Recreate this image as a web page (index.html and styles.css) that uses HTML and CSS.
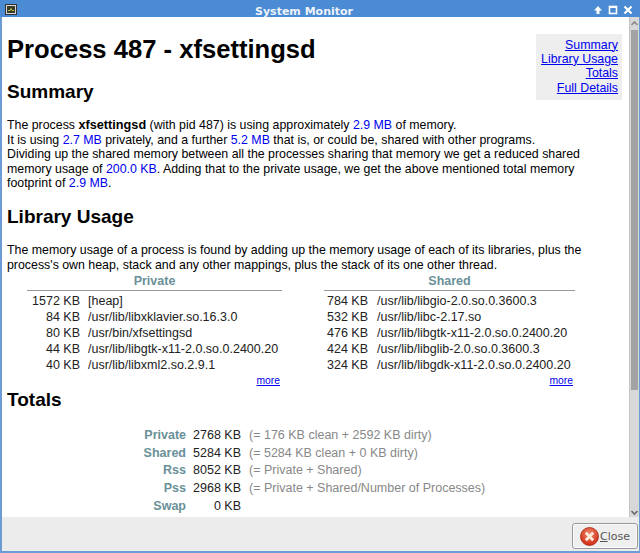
FILE: index.html
```html
<!DOCTYPE html>
<html lang="en">
<head>
<meta charset="utf-8">
<title>System Monitor</title>
<link rel="stylesheet" href="styles.css">
</head>
<body>
<div class="window">
  <header class="titlebar">
    <svg class="app-icon" width="12" height="11" viewBox="0 0 12 11"><rect x="0.5" y="0.5" width="11" height="10" fill="#d8d8d8" stroke="#333"/><rect x="2" y="2" width="8" height="7" fill="#3a3a2a"/><path d="M3 6.5h2l1-2 1 2h2" stroke="#b8c040" fill="none"/></svg>
    <span class="title">System Monitor</span>
    <div class="controls">
      <svg width="10" height="10" viewBox="0 0 10 10"><path d="M5 1L9 5.5H6.5V9h-3V5.5H1z" fill="#fff"/></svg>
      <svg width="10" height="10" viewBox="0 0 10 10"><rect x="1.5" y="1.5" width="7" height="7" fill="none" stroke="#fff" stroke-width="1.6"/><rect x="1" y="1" width="8" height="2" fill="#fff"/></svg>
      <svg width="10" height="10" viewBox="0 0 10 10"><path d="M1.5 1.5l7 7M8.5 1.5l-7 7" stroke="#fff" stroke-width="2.2"/></svg>
    </div>
  </header>
  <div class="middle">
    <main class="content">
      <nav class="toc">
        <a href="#s">Summary</a>
        <a href="#l">Library Usage</a>
        <a href="#t">Totals</a>
        <a href="#f">Full Details</a>
      </nav>
      <h1>Process 487 - xfsettingsd</h1>
      <h2 id="s" class="h-summary">Summary</h2>
      <p>The process <b>xfsettingsd</b> (with pid 487) is using approximately <span class="v">2.9 MB</span> of memory.<br>
      It is using <span class="v">2.7 MB</span> privately, and a further <span class="v">5.2 MB</span> that is, or could be, shared with other programs.<br>
      Dividing up the shared memory between all the processes sharing that memory we get a reduced shared<br>
      memory usage of <span class="v">200.0 KB</span>. Adding that to the private usage, we get the above mentioned total memory<br>
      footprint of <span class="v">2.9 MB</span>.</p>
      <h2 id="l" class="h-lib">Library Usage</h2>
      <p>The memory usage of a process is found by adding up the memory usage of each of its libraries, plus the<br>
      process's own heap, stack and any other mappings, plus the stack of its one other thread.</p>
      <div class="libs">
        <section class="lib-col private">
          <h3>Private</h3>
          <div class="row"><span class="kb">1572 KB</span><span>[heap]</span></div>
          <div class="row"><span class="kb">84 KB</span><span>/usr/lib/libxklavier.so.16.3.0</span></div>
          <div class="row"><span class="kb">80 KB</span><span>/usr/bin/xfsettingsd</span></div>
          <div class="row"><span class="kb">44 KB</span><span>/usr/lib/libgtk-x11-2.0.so.0.2400.20</span></div>
          <div class="row"><span class="kb">40 KB</span><span>/usr/lib/libxml2.so.2.9.1</span></div>
          <a class="more" href="#m">more</a>
        </section>
        <section class="lib-col shared">
          <h3>Shared</h3>
          <div class="row"><span class="kb">784 KB</span><span>/usr/lib/libgio-2.0.so.0.3600.3</span></div>
          <div class="row"><span class="kb">532 KB</span><span>/usr/lib/libc-2.17.so</span></div>
          <div class="row"><span class="kb">476 KB</span><span>/usr/lib/libgtk-x11-2.0.so.0.2400.20</span></div>
          <div class="row"><span class="kb">424 KB</span><span>/usr/lib/libglib-2.0.so.0.3600.3</span></div>
          <div class="row"><span class="kb">324 KB</span><span>/usr/lib/libgdk-x11-2.0.so.0.2400.20</span></div>
          <a class="more" href="#m">more</a>
        </section>
      </div>
      <h2 id="t" class="h-totals">Totals</h2>
      <div class="totals">
        <b>Private</b><span class="tv">2768 KB</span><span class="note">(= 176 KB clean + 2592 KB dirty)</span>
        <b>Shared</b><span class="tv">5284 KB</span><span class="note">(= 5284 KB clean + 0 KB dirty)</span>
        <b>Rss</b><span class="tv">8052 KB</span><span class="note">(= Private + Shared)</span>
        <b>Pss</b><span class="tv">2968 KB</span><span class="note">(= Private + Shared/Number of Processes)</span>
        <b>Swap</b><span class="tv">0 KB</span><span class="note"></span>
      </div>
    </main>
    <div class="scrollbar">
      <svg class="arrow arrow-up" width="9" height="9" viewBox="0 0 9 9"><path d="M1.5 6L4.5 3l3 3" fill="none" stroke="#8a8a8a" stroke-width="1.6"/></svg>
      <div class="thumb"></div>
      <svg class="arrow" width="9" height="9" viewBox="0 0 9 9"><path d="M1.5 3l3 3 3-3" fill="none" stroke="#6a6a6a" stroke-width="1.6"/></svg>
    </div>
  </div>
  <footer class="actions">
    <button class="close" type="button">
      <svg width="19" height="19" viewBox="0 0 18 18"><defs><radialGradient id="g" cx="50%" cy="35%" r="65%"><stop offset="0" stop-color="#f08a70"/><stop offset="1" stop-color="#d02a10"/></radialGradient></defs><circle cx="9" cy="9" r="8.5" fill="url(#g)" stroke="#a82a10" stroke-width="0.8"/><path d="M5.5 5.5l7 7M12.5 5.5l-7 7" stroke="#fbeedd" stroke-width="2.6"/></svg>
      <span><u>C</u>lose</span>
    </button>
  </footer>
</div>
</body>
</html>
```
FILE: styles.css
```css
* { box-sizing: border-box; }
html, body { margin: 0; height: 100%; }
body { width: 640px; height: 553px; overflow: hidden; font-family: "Liberation Sans", Arial, sans-serif; }
.window { width: 640px; height: 553px; display: flex; flex-direction: column; background: #ececec; border: solid #6c9bd6; border-width: 0 1px 2px 2px; }
.titlebar { flex: 0 0 17px; margin: 0 -1px 0 -2px; background: #4a8bd4; display: flex; align-items: center; padding: 0 4px 0 5px; }
.app-icon { display: block; margin-top: 1px; }
.title { flex: 1; align-self: flex-start; height: 17px; text-align: center; color: #eef3fa; font: bold 11px/13px "DejaVu Sans", sans-serif; padding: 4.5px 2px 0 0; }
.controls { display: flex; gap: 5px; margin: 3px 3px 0 0; }
.controls svg { display: block; }
.middle { flex: 0 0 500px; display: flex; min-height: 0; }
.content { width: 627px; height: 500px; flex: none; background: #fff; padding: 4px 6px 0 5px; overflow: hidden; font-size: 12.36px; line-height: 14.5px; color: #000; position: relative; }
h1 { margin: 13px 0 0; font-size: 25.6px; line-height: 30px; font-weight: bold; }
h2 { margin: 0; font-size: 19px; line-height: 22px; font-weight: bold; }
.h-summary { margin-top: 17px; }
.h-lib { margin-top: 15.5px; }
.h-totals { margin-top: 2px; }
p { margin: 15px 0 0; }
p b { font-size: 12.7px; }
.v { color: #0000ee; }
.toc { position: absolute; top: 17px; right: 7px; width: 86px; height: 66px; background: #eeeeee; padding: 3.5px 4px 0; text-align: right; display: flex; flex-direction: column; line-height: 14.4px; }
a { color: #0000ee; text-decoration: underline; }
.libs { display: flex; margin: 1px 0 0 20px; gap: 42px; color: #222; font-size: 12.5px; }
.lib-col h3 { margin: 0; font-size: 12.5px; font-weight: bold; line-height: 17px; color: #6a9098; text-align: center; border-bottom: 1px solid #999; height: 18px; }
.private { width: 255px; }
.shared { width: 251px; }
.row { display: flex; height: 16px; line-height: 16px; }
.kb { width: 53px; text-align: right; margin-right: 8px; flex: none; }
.shared .kb { width: 44px; margin-right: 9px; }
.lib-col .row:first-of-type { margin-top: 2px; }
.more { display: block; text-align: right; font-size: 10.3px; line-height: 12px; margin: 2.4px 2px 0 0; }
.totals { display: grid; grid-template-columns: 179px 49px 1fr; column-gap: 6px; margin-top: 15.6px; line-height: 17.75px; color: #222; font-size: 12.5px; }
.totals b { color: #6a9098; text-align: right; }
.tv { text-align: right; }
.note { color: #888; padding-left: 2px; }
.scrollbar { flex: 1; background: #d8d8d8; border-left: 1px solid #c4c4c4; display: flex; flex-direction: column; align-items: center; }
.arrow { flex: none; }
.arrow-up { margin-top: 1.5px; }
.thumb { flex: 1; width: 7px; background: #a3a3a3; margin: 2.5px 0 118px; }
.actions { flex: 1; display: flex; justify-content: flex-end; align-items: flex-end; padding: 0 1px 2px; }
.close { width: 66px; height: 26px; display: flex; align-items: center; gap: 1px; padding: 0 0 0 7px; background: #efefef; border: 1px solid #999; border-radius: 3px; box-shadow: inset 0 0 0 1px #fafafa; font: 11px "DejaVu Sans", sans-serif; color: #555; }
```
